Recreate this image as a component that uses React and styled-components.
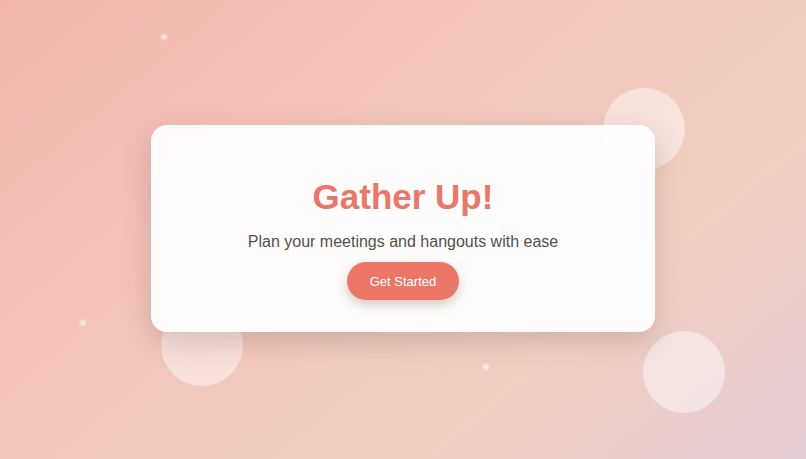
import React from "react";
import styled, { createGlobalStyle } from "styled-components";

const GlobalStyle = createGlobalStyle`
  html, body {
    margin: 0;
    padding: 0;
  }
  body {
    font-family: "Liberation Sans", Arial, sans-serif;
  }
`;

const bubbles = [
  { x: 644, y: 129, size: 82 },
  { x: 202, y: 345, size: 82 },
  { x: 684, y: 372, size: 82 },
];

const dots = [
  { x: 164, y: 37 },
  { x: 83, y: 323 },
  { x: 486, y: 367 },
];

function App() {
  return (
    <>
      <GlobalStyle />
      <Page>
        {bubbles.map((b, i) => (
          <Bubble
            key={i}
            style={{ left: b.x - b.size / 2, top: b.y - b.size / 2, width: b.size, height: b.size }}
          />
        ))}
        {dots.map((d, i) => (
          <Dot key={i} style={{ left: d.x - 3, top: d.y - 3 }} />
        ))}
        <Card>
          <Title>Gather Up!</Title>
          <Subtitle>Plan your meetings and hangouts with ease</Subtitle>
          <Button type="button">Get Started</Button>
        </Card>
      </Page>
    </>
  );
}

export default App;

const Page = styled.div`
  position: relative;
  overflow: hidden;
  width: 100%;
  height: 100vh;
  display: flex;
  align-items: center;
  justify-content: center;
  background: linear-gradient(
    140deg,
    #f1b5ad 0%,
    #f3c7bd 45%,
    #f2d0c4 72%,
    #e3ccd3 100%
  );
`;

const Bubble = styled.div`
  position: absolute;
  border-radius: 50%;
  background: rgba(255, 255, 255, 0.45);
`;

const Dot = styled.div`
  position: absolute;
  width: 6px;
  height: 6px;
  border-radius: 50%;
  background: rgba(255, 255, 255, 0.65);
  filter: blur(0.8px);
`;

const Card = styled.div`
  position: relative;
  z-index: 1;
  box-sizing: border-box;
  width: 504px;
  height: 207px;
  margin-top: -2px;
  padding: 32px;
  border-radius: 16px;
  background: rgba(255, 255, 255, 0.95);
  box-shadow: 0 10px 28px rgba(90, 60, 55, 0.22);
  display: flex;
  flex-direction: column;
  align-items: center;
  text-align: center;
`;

const Title = styled.h1`
  margin: 20px 0 16px;
  font-size: 35px;
  line-height: 40px;
  font-weight: 700;
  color: #e9776a;
`;

const Subtitle = styled.p`
  margin: 0 0 11px;
  font-size: 16px;
  line-height: 18px;
  color: #505050;
`;

const Button = styled.button`
  height: 38px;
  padding: 0 23px;
  border: none;
  border-radius: 19px;
  background: #ec7766;
  color: #ffffff;
  font-family: "Liberation Sans", Arial, sans-serif;
  font-size: 13px;
  cursor: pointer;
  box-shadow: 0 5px 12px rgba(100, 50, 40, 0.25);
`;
